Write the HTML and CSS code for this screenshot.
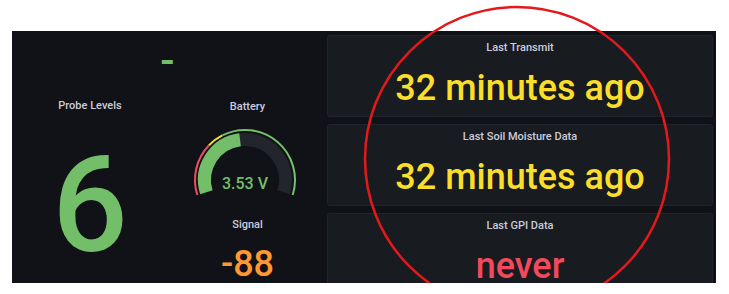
FILE: index.html
```html
<!DOCTYPE html>
<html lang="en">
  <head>
    <meta charset="UTF-8" />
    <meta name="viewport" content="width=device-width, initial-scale=1.0" />
    <title>Probe dashboard</title>
    <link rel="stylesheet" href="styles.css">
  </head>
  <body>
    <div class="dashboard">
      <div class="left">
        <div class="top-stat">-</div>
        <div class="sub-columns">
          <div class="probe">
            <div class="title">Probe Levels</div>
            <div class="probe-value">6</div>
          </div>
          <div class="device">
            <div class="title battery-title">Battery</div>
            <svg class="gauge" width="159" height="72" viewBox="0 0 159 72">
              <path d="M38.37 65.18 A40.5 40.5 0 1 1 115.63 65.18" fill="none" stroke="#22252b" stroke-width="13" />
              <path d="M38.37 65.18 A40.5 40.5 0 0 1 72.06 12.80" fill="none" stroke="#73bf69" stroke-width="13" />
              <path d="M29.31 68.04 A50 50 0 0 1 41.03 18.27" fill="none" stroke="#f2495c" stroke-width="2" />
              <path d="M41.03 18.27 A50 50 0 0 1 54.30 8.45" fill="none" stroke="#fade2a" stroke-width="2" />
              <path d="M54.30 8.45 A50 50 0 0 1 124.69 68.04" fill="none" stroke="#73bf69" stroke-width="2" />
              <text class="gauge-text" x="77" y="62" text-anchor="middle">3.53 V</text>
            </svg>
            <div class="title signal-title">Signal</div>
            <div class="signal-value">-88</div>
          </div>
        </div>
      </div>

      <div class="right">
        <div class="panel">
          <div class="title">Last Transmit</div>
          <div class="big-value yellow">32 minutes ago</div>
        </div>
        <div class="panel">
          <div class="title">Last Soil Moisture Data</div>
          <div class="big-value yellow">32 minutes ago</div>
        </div>
        <div class="panel">
          <div class="title">Last GPI Data</div>
          <div class="big-value red">never</div>
        </div>
      </div>
    </div>

    <svg class="annotation" width="729" height="283" viewBox="0 0 729 283">
      <circle cx="517" cy="159" r="152" fill="none" stroke="#e3191c" stroke-width="2.5" />
    </svg>
  </body>
</html>
```

FILE: styles.css
```css
body {
  margin: 0;
  background-color: #ffffff;
  font-family: Roboto, "Liberation Sans", sans-serif;
}

.dashboard {
  display: flex;
  margin: 31px 0 0 12px;
  width: 704px;
  height: 252px;
  overflow: hidden;
  background-color: #111217;
}

.left {
  width: 315px;
}

.top-stat {
  padding: 10px 4px 0 0;
  height: 54px;
  font-size: 42px;
  line-height: 40px;
  font-weight: 500;
  color: #73bf69;
  text-align: center;
}

.sub-columns {
  display: grid;
  grid-template-columns: 156px 159px;
}

.title {
  font-size: 11px;
  line-height: 16px;
  font-weight: 500;
  color: #ccccdc;
  text-align: center;
}

.probe .title {
  padding-top: 3px;
}

.probe-value {
  margin-top: 25px;
  font-size: 133px;
  line-height: 1;
  font-weight: 500;
  color: #73bf69;
  text-align: center;
}

.battery-title {
  padding-top: 4px;
}

.gauge {
  display: block;
  margin-top: 12px;
}

.gauge-text {
  font-family: Roboto, "Liberation Sans", sans-serif;
  font-size: 16px;
  font-weight: 500;
  fill: #73bf69;
}

.signal-title {
  margin-top: 18px;
}

.signal-value {
  margin-top: 13px;
  font-size: 36px;
  line-height: 1;
  font-weight: 500;
  color: #ff9830;
  text-align: center;
}

.right {
  display: flex;
  flex-direction: column;
  gap: 7px;
  width: 386px;
  padding-top: 4px;
}

.panel {
  flex: 0 0 82px;
  box-sizing: border-box;
  padding-top: 4px;
  background-color: #181b1f;
  border: 1px solid #202329;
  border-radius: 3px;
}

.big-value {
  margin-top: 14px;
  font-size: 36px;
  line-height: 1;
  font-weight: 500;
  text-align: center;
}

.yellow {
  color: #fade2a;
}

.red {
  color: #f2495c;
}

.annotation {
  position: absolute;
  left: 0;
  top: 0;
}
```
